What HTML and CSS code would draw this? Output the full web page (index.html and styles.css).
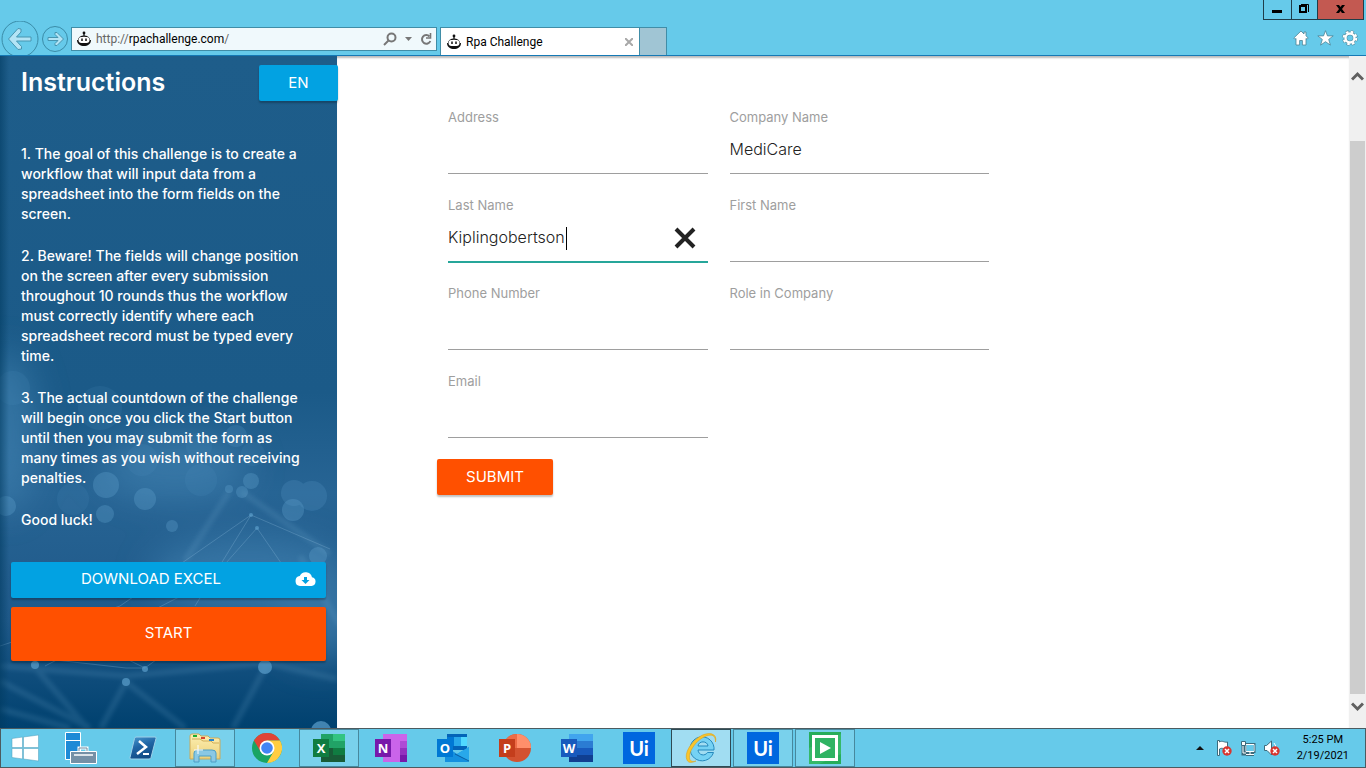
FILE: index.html
```html
<!DOCTYPE html>
<html lang="en">
<head>
<meta charset="utf-8">
<title>Rpa Challenge</title>
<link rel="stylesheet" href="styles.css">
</head>
<body>
<svg class="defs" width="0" height="0" aria-hidden="true">
  <symbol id="bot" viewBox="0 0 16 16">
    <circle cx="8" cy="2" r="1.4" fill="#111"/><path d="M8 2v3" stroke="#111" stroke-width="1.2"/>
    <path d="M2.500 10C2.500 3.500 13.500 3.500 13.500 10" fill="#fff" stroke="#111" stroke-width="1.400"/>
    <path d="M1 9h14c0 8-14 8-14 0Z" fill="#111"/>
    <rect x="2.500" y="6" width="11" height="6" rx="3" fill="#fff"/>
    <path d="M6 7.500v2.500M10 7.500v2.500" stroke="#111" stroke-width="1.500"/>
  </symbol>
  <symbol id="badge" viewBox="0 0 10 10">
    <circle cx="5" cy="5" r="4.700" fill="#d8362f"/><path d="M3 3l4 4M7 3L3 7" stroke="#fff" stroke-width="1.500"/>
  </symbol>
</svg>

<header class="chrome">
  <div class="window-controls">
    <button class="win" aria-label="Minimize"><svg width="27" height="19"><path d="M8 10h10v3H8z"/></svg></button>
    <button class="win" aria-label="Restore"><svg width="25" height="19" fill="none" stroke="#000"><path d="M8 6h6v6H8z" stroke-width="2"/><path d="M9 4.500h7.500V12" stroke-width="1"/></svg></button>
    <button class="win win-close" aria-label="Close"><svg width="45" height="19"><path d="M18 5h3l1.500 2L24 5h3l-3 4 3 4h-3l-1.500-2L21 13h-3l3-4z"/></svg></button>
  </div>
  <div class="toolbar">
    <button class="nav" aria-label="Back"><svg width="40" height="34" viewBox="0 0 40 34" fill="none"><circle cx="20" cy="18" r="18" stroke="#3a8ca8"/><path d="M21 8l-3-.5L8.500 18 18 28.500l3.500-.5v-2.500L16.500 20H31v-4H16.500l4.500-5z" fill="#b3e4f5" stroke="#4795b0"/></svg></button>
    <button class="nav" aria-label="Forward"><svg width="28" height="34" viewBox="0 0 28 34" fill="none"><circle cx="14" cy="18" r="12.500" stroke="#3a8ca8"/><path d="M14 11.500h2L22.500 18 16 24.500h-2v-2l3-3H7v-3h10l-3-3z" fill="#b3e4f5" stroke="#4795b0"/></svg></button>
    <div class="address">
      <svg width="16" height="16"><use href="#bot"/></svg>
      <div class="url" role="textbox" aria-label="Address bar" tabindex="0"><span>http://</span>rpachallenge.com<span>/</span></div>
      <button aria-label="Search"><svg width="14" height="14" fill="none" stroke="#777" stroke-width="2"><circle cx="8.500" cy="5.500" r="4"/><path d="M5.500 8.500L1 13"/></svg></button>
      <button aria-label="Show suggestions"><svg width="7" height="4"><path d="M0 0h7L3.500 4z" fill="#777"/></svg></button>
      <button aria-label="Refresh"><svg width="12" height="13" fill="none" stroke="#777" stroke-width="2"><path d="M9.500 3.500A4.300 4.300 0 1 0 10.300 8"/><path d="M10.500 0v5H6" stroke-width="1.600"/></svg></button>
    </div>
    <div class="tab"><svg width="16" height="16"><use href="#bot"/></svg><span>Rpa Challenge</span><button aria-label="Close tab"><svg width="8" height="8" stroke="#a8a8a8" stroke-width="2"><path d="M0 0l8 8M8 0L0 8"/></svg></button></div>
    <button class="new-tab" aria-label="New tab"></button>
    <div class="tools">
      <button aria-label="Home"><svg width="16" height="16" viewBox="0 0 16 16" fill="#fff" stroke="#4d8496" stroke-width=".8"><path d="M8 1L.8 8l1.200 1.300L3 8.400V15h3.600v-4.500h2.800V15H13V8.400l1 .9L15.200 8 13 5.800V2h-2v2z"/></svg></button>
      <button aria-label="Favorites"><svg width="17" height="16" viewBox="0 0 17 16" fill="#fff" stroke="#4d8496" stroke-width=".8"><path d="M8.500.7l2 5.200h5.700l-4.500 3.500 1.700 5.700-4.900-3.400-4.900 3.400 1.700-5.700L.8 5.900h5.700z"/></svg></button>
      <button aria-label="Tools"><svg width="16" height="16" viewBox="0 0 16 16"><g fill="none"><circle cx="8" cy="8" r="6.300" stroke="#4d8496" stroke-width="3" stroke-dasharray="3 1.950"/><circle cx="8" cy="8" r="4.600" stroke="#4d8496" stroke-width="3.600"/><circle cx="8" cy="8" r="6.300" stroke="#fff" stroke-width="2" stroke-dasharray="2.600 2.350"/><circle cx="8" cy="8" r="4.500" stroke="#fff" stroke-width="2.400"/></g></svg></button>
    </div>
  </div>
</header>

<div class="page">
  <aside class="sidebar">
    <svg class="network" viewBox="0 0 337 672" preserveAspectRatio="none" aria-hidden="true">
      <defs>
        <linearGradient id="base" x1="0" y1="0" x2="0" y2="1"><stop offset="0" stop-color="#1e5d8a"/><stop offset=".5" stop-color="#1b5a88"/><stop offset=".65" stop-color="#276494"/><stop offset=".84" stop-color="#1f5989"/><stop offset="1" stop-color="#00416f"/></linearGradient>
        <linearGradient id="edge"><stop offset="0" stop-color="#003a5f" stop-opacity=".55"/><stop offset="1" stop-color="#003a5f" stop-opacity="0"/></linearGradient>
        <filter id="haze" x="-50%" y="-50%" width="200%" height="200%"><feGaussianBlur stdDeviation="18"/></filter>
        <filter id="soft"><feGaussianBlur stdDeviation="2"/></filter>
      </defs>
      <rect width="337" height="672" fill="url(#base)"/>
      <g filter="url(#haze)" fill="#4b8dbc" opacity=".5">
        <ellipse cx="5" cy="375" rx="30" ry="80"/><ellipse cx="175" cy="410" rx="75" ry="30"/><ellipse cx="250" cy="520" rx="100" ry="38"/><ellipse cx="320" cy="560" rx="45" ry="45"/>
      </g>
      <g fill="#5c9dcb" opacity=".11">
        <circle cx="13" cy="332" r="17"/><circle cx="100" cy="352" r="22"/><circle cx="253" cy="398" r="12"/><circle cx="142" cy="404" r="16"/><circle cx="73" cy="443" r="16"/><circle cx="199" cy="390" r="13"/><circle cx="201" cy="424" r="16"/>
      </g>
      <g fill="#5c9dcb" opacity=".22">
        <circle cx="236" cy="380" r="11"/><circle cx="294" cy="437" r="13"/><circle cx="312" cy="440" r="15"/>
      </g>
      <g fill="#5fa0cc" opacity=".34">
        <circle cx="106" cy="429" r="13"/><circle cx="145" cy="443" r="11"/><circle cx="251" cy="425" r="8"/><circle cx="6" cy="450" r="10"/><circle cx="105" cy="458" r="9"/><circle cx="172" cy="470" r="6"/><circle cx="229" cy="433" r="4"/><circle cx="242" cy="436" r="6"/><circle cx="293" cy="454" r="11"/><circle cx="318" cy="500" r="9"/>
      </g>
      <g stroke="#76add2" stroke-width="6" fill="none" opacity=".17" filter="url(#soft)">
        <path d="M242 436L330 498M229 436L185 505M0 610L126 620L266 607L337 623M32 608L87 672M126 626L101 672M126 626L185 672M266 610L233 672M0 625L90 672M0 653L70 672M300 500L340 570"/>
      </g>
      <g stroke="#8cbbd9" fill="none" opacity=".3">
        <path d="M251 459L120 550L0 590M251 459L195 550M251 459L330 493M257 472L210 525L45 610M257 472L290 520M20 600L126 612L145 612L175 590M100 590L145 612"/>
      </g>
      <g fill="#579ac7" opacity=".75"><circle cx="251" cy="459" r="2"/><circle cx="257" cy="472" r="2"/><circle cx="35" cy="609" r="4"/><circle cx="145" cy="613" r="3"/><circle cx="126" cy="626" r="4"/><circle cx="265" cy="611" r="7"/><circle cx="321" cy="675" r="10"/></g>
      <rect width="9" height="672" fill="url(#edge)"/>
    </svg>
    <div class="sidebar-head"><h1>Instructions</h1><button class="btn lang">EN</button></div>
    <div class="steps">
      <p>1. The goal of this challenge is to create a<br>workflow that will input data from a<br>spreadsheet into the form fields on the<br>screen.</p>
      <p>2. Beware! The fields will change position<br>on the screen after every submission<br>throughout 10 rounds thus the workflow<br>must correctly identify where each<br>spreadsheet record must be typed every<br>time.</p>
      <p>3. The actual countdown of the challenge<br>will begin once you click the Start button<br>until then you may submit the form as<br>many times as you wish without receiving<br>penalties.</p>
      <p>Good luck!</p>
    </div>
    <div class="actions">
      <a class="btn download" href="#excel"><span>Download Excel</span><svg width="21" height="14" viewBox="0 0 21 14"><path d="M17 5.300A6.500 6.500 0 0 0 4.700 4.100 5 5 0 0 0 5 14h11.500a4.400 4.400 0 0 0 .5-8.700zM14.500 8l-4 4-4-4H9V5h3v3z" fill="#fff"/></svg></a>
      <button class="btn start">Start</button>
    </div>
  </aside>

  <main>
    <form class="form">
      <div class="fields">
        <div class="field"><label for="address">Address</label><input id="address" type="text"></div>
        <div class="field"><label for="company">Company Name</label><input id="company" type="text" value="MediCare"></div>
        <div class="field active"><label for="last">Last Name</label><input id="last" type="text" value="Kiplingobertson"><i class="caret"></i><button class="clear" type="button" aria-label="Clear"><svg width="22" height="22" stroke="#222" stroke-width="4"><path d="M2 2l18 18M20 2L2 20"/></svg></button></div>
        <div class="field"><label for="first">First Name</label><input id="first" type="text"></div>
        <div class="field"><label for="phone">Phone Number</label><input id="phone" type="text"></div>
        <div class="field"><label for="role">Role in Company</label><input id="role" type="text"></div>
        <div class="field"><label for="email">Email</label><input id="email" type="text"></div>
      </div>
      <button class="btn submit" type="button">Submit</button>
    </form>
  </main>

  <div class="scrollbar">
    <button aria-label="Scroll up"><svg width="13" height="10" fill="none" stroke="#606060" stroke-width="3"><path d="M1 8.500L6.500 3 12 8.500"/></svg></button>
    <div class="thumb"></div>
    <button aria-label="Scroll down"><svg width="13" height="10" fill="none" stroke="#606060" stroke-width="3"><path d="M1 1.500L6.500 7 12 1.500"/></svg></button>
  </div>
</div>

<footer class="taskbar">
  <button class="task task-start" aria-label="Start menu"><svg width="28" height="28" viewBox="0 0 28 28" fill="#fff" stroke="#4f9db8" stroke-width=".5"><path d="M1 4.500l10.500-1.400v10.400H1zM12.500 3L27.500 1v12.500h-15zM1 14.500h10.500v10.400L1 23.500zM12.500 14.500h15V27l-15-2z"/></svg></button>
  <button class="task" aria-label="Server Manager"><svg width="32" height="32" viewBox="0 0 32 32" stroke="#fff"><path d="M.5 .5h15v27H.5z" fill="#1e8ad6"/><path d="M.5 8.500h15"/><path d="M14 20v-4h8v4" fill="none" stroke-width="3"/><path d="M14 20v-4h8v4" fill="none" stroke="#6c8aa0"/><path d="M5.500 19.500h26v12h-26z" fill="#7590a6"/><path d="M9 23h19" stroke-width="1.500"/></svg></button>
  <button class="task" aria-label="PowerShell"><svg width="28" height="24" viewBox="0 0 28 24"><defs><linearGradient id="ps" x2=".4" y2="1"><stop stop-color="#4a9ad0"/><stop offset=".5" stop-color="#2065a5"/><stop offset="1" stop-color="#114b85"/></linearGradient></defs><path d="M7 1h19q1.500 0 1 1.500l-5 19q-.4 1.500-2 1.500H2q-1.400 0-1-1.500l4.500-19Q6 1 7 1z" fill="url(#ps)" stroke="#9fd0e8"/><path d="M10 5l7 6-9 7" fill="none" stroke="#fff" stroke-width="2.500"/><path d="M14 18h6" stroke="#fff" stroke-width="2"/></svg></button>
  <button class="task open" aria-label="File Explorer"><svg width="32" height="30" viewBox="0 0 32 30"><defs><linearGradient id="fo" x2="0" y2="1"><stop stop-color="#fdf0b4"/><stop offset="1" stop-color="#ecd078"/></linearGradient></defs><path d="M1 26V3q0-2 2-2h7l2 2h7l2 2h8q2 0 2 2v19z" fill="url(#fo)" stroke="#cba95a"/><path d="M3 6h8l3 2h8l2 2h6" fill="none" stroke="#d1ae58"/><path d="M4 2h4v2H4z" fill="#1aae33"/><path d="M12 4h4v2h-4z" fill="#d5452f"/><path d="M20 6h5v2h-5z" fill="#2686d1"/><path d="M5 29V20q0-3 4-3h14q4 0 4 3v9h-5v-6H10v6z" fill="#8ac8e4" stroke="#4c9fc6"/><path d="M9 12v9M5 17h9" stroke="#fff"/></svg></button>
  <button class="task" aria-label="Chrome"><svg width="30" height="30" viewBox="0 0 30 30"><circle cx="15" cy="15" r="15" fill="#19a463"/><path d="M2 7.500A15 15 0 0 1 28 7.500H15l-6.500 11z" fill="#e14436"/><path d="M28 7.500A15 15 0 0 1 15 30l6.500-11.300L15 7.500z" fill="#ffcd41"/><circle cx="15" cy="15" r="7.500" fill="#fff"/><circle cx="15" cy="15" r="5.800" fill="#4285f4"/></svg></button>
  <button class="task open" aria-label="Excel"><svg class="office" width="32" height="28" viewBox="0 0 32 28"><path d="M8 0h12v28H8z" fill="#21a366"/><path d="M20 0h12v7H20z" fill="#33c481"/><path d="M20 7h12v7H20z" fill="#21a366"/><path d="M8 14h12v7H8zM8 21h24v7H8z" fill="#185c37"/><path d="M20 14h12v7H20z" fill="#107c41"/><path d="M0 5h16v18H0z" fill="#107c41"/><text x="8" y="19">X</text></svg></button>
  <button class="task" aria-label="OneNote"><svg class="office" width="32" height="28" viewBox="0 0 32 28"><path d="M8 0h24v28H8z" fill="#ca64ea"/><path d="M25 7h7v7h-7z" fill="#ae4bd5"/><path d="M25 14h7v7h-7z" fill="#9332bf"/><path d="M25 21h7v7h-7z" fill="#7719aa"/><path d="M0 5h16v18H0z" fill="#7719aa"/><text x="8" y="19">N</text></svg></button>
  <button class="task" aria-label="Outlook"><svg class="office" width="32" height="28" viewBox="0 0 32 28"><path d="M10 0h20v16H10z" fill="#0364b8"/><path d="M10 3h7v9h-7z" fill="#0078d4"/><path d="M17 3h7v9h-7z" fill="#28a8ea"/><path d="M24 3h6v9h-6z" fill="#50d9ff"/><path d="M8 12l12 8 12-7v15H8z" fill="#1490df"/><path d="M20 20l12 8V13z" fill="#28a8ea"/><path d="M18 20l14 7" stroke="#0a5ca0"/><path d="M0 5h16v18H0z" fill="#0078d4"/><text x="8" y="19">O</text></svg></button>
  <button class="task" aria-label="PowerPoint"><svg class="office" width="32" height="28" viewBox="0 0 32 28"><circle cx="18" cy="14" r="14" fill="#d35230"/><path d="M18 14V0a14 14 0 0 1 14 14z" fill="#ff8f6b"/><path d="M18 14V0A14 14 0 0 0 4 14z" fill="#ed6c47"/><path d="M0 5h16v18H0z" fill="#c43e1c"/><text x="8" y="19">P</text></svg></button>
  <button class="task" aria-label="Word"><svg class="office" width="32" height="28" viewBox="0 0 32 28"><path d="M8 0h24v7H8z" fill="#41a5ee"/><path d="M8 7h24v7H8z" fill="#2b7cd3"/><path d="M8 14h24v7H8z" fill="#185abd"/><path d="M8 21h24v7H8z" fill="#103f91"/><path d="M0 5h16v18H0z" fill="#185abd"/><text x="8" y="19">W</text></svg></button>
  <button class="task" aria-label="UiPath Studio"><span class="ui">Ui</span></button>
  <button class="task focused" aria-label="Internet Explorer"><svg width="32" height="30" viewBox="0 0 32 30"><path fill-rule="evenodd" d="M28.500 19.500A12 12 0 1 1 29 14.500v2.500H13c.5 5.500 7 6.500 9.500 2.500zM13 13h10c-.5-5.500-9.500-5.500-10 0z" fill="#75d2f4" stroke="#2589bd"/><path d="M30.500 9C33 0 23-2 14 4 5 10-1 21 2 27c1 3 5 3 9 1-4 1-6 0-6.500-3C4 19 9 11 15 6.500 21 2 27 1 29 3.500c1 1.200 1.500 3 1.500 5.500z" fill="#f9c52c" stroke="#d99a13" stroke-width=".5"/></svg></button>
  <button class="task open" aria-label="UiPath"><span class="ui">Ui</span></button>
  <button class="task open" aria-label="UiPath Robot"><svg width="32" height="32"><path d="M0 0h32v32H0z" fill="#27ad5b"/><path d="M0 16L32 2v20L10 32H0z" fill="#35b968"/><path d="M4.500 4.500h23v23h-23z" fill="#2fb363" stroke="#fff" stroke-width="3"/><path d="M11 10l11 6-11 6z" fill="#fff"/></svg></button>
  <div class="tray">
    <button aria-label="Show hidden icons"><svg width="8" height="4"><path d="M0 4h8L4 0z" fill="#111"/></svg></button>
    <button class="first-icon" aria-label="Action Center"><svg width="16" height="16"><path d="M1.500.5v15h2V9c3-2 5 1 8 0V2c-3 1-5-2-8 0V.5z" fill="#fff" stroke="#3c6b7c"/><use href="#badge" x="6" y="6" width="10" height="10"/></svg></button>
    <button aria-label="Network"><svg width="16" height="16" fill="none"><path d="M6 4.500h8v7H6zM10 12v2M6 14.500h8M3 6v8h3" stroke="#3c6b7c" stroke-width="3"/><path d="M6 4.500h8v7H6zM10 12v2M6 14.500h8M3 6v7h3" stroke="#fff"/><path d="M6.500 5h7v6h-7z" fill="#66caea"/><path d="M1.500 1.500h4v4h-4z" fill="#fff" stroke="#3c6b7c"/></svg></button>
    <button aria-label="Volume"><svg width="16" height="16"><path d="M.5 5.500h2l5-4.500v14L3 10.500H.5z" fill="#fff" stroke="#3c6b7c"/><path d="M10 3q3 3 1 6" fill="none" stroke="#fff"/><use href="#badge" x="6" y="6" width="10" height="10"/></svg></button>
    <time class="clock" datetime="2021-02-19T17:25"><span>5:25 PM</span><span>2/19/2021</span></time>
  </div>
</footer>
</body>
</html>
```
FILE: styles.css
```css
* { box-sizing: border-box; }

body {
  margin: 0;
  min-height: 100vh;
  display: flex;
  flex-direction: column;
  background: #fff;
  font-family: Inter, "Open Sans", sans-serif;
  color: #222;
}

button {
  padding: 0;
  border: 0;
  background: none;
  font: inherit;
  color: inherit;
}

svg { display: block; flex: none; }
.defs { position: absolute; }

/* Browser frame */
.chrome {
  display: flex;
  flex-direction: column;
  height: 56px;
  background: #66caea;
  border-bottom: 1px solid #1579b5;
  font: 12px/16px Roboto, "Open Sans", sans-serif;
  color: #000;
}

.window-controls { display: flex; justify-content: flex-end; height: 20px; padding-right: 2px; }
.win { border: solid #1f3e4a; border-width: 0 0 1px 1px; }
.win-close { background: #c35951; border-right-width: 1px; }

.toolbar { display: flex; align-items: flex-end; flex: 1; }
.nav { padding-right: 1px; }

.address {
  display: flex;
  align-items: center;
  gap: 8px;
  width: 32%;
  max-width: 366px;
  height: 24px;
  margin: 0 3px 4px 1px;
  padding: 0 4px;
  background: #f0f9fc;
  border: 1px solid #408da7;
}
.url { flex: 1; margin-left: -4px; }
.url span { color: #666; }

.tab {
  display: flex;
  align-items: center;
  gap: 4px;
  width: 200px;
  height: 28px;
  padding: 0 6px 0 5px;
  background: #fff;
  border: 1px solid #408da7;
  border-bottom: 0;
}
.tab span { flex: 1; }
.new-tab { width: 27px; height: 28px; background: #a0c5d4; border: solid #408da7; border-width: 1px 1px 0 0; }
.tools { display: flex; gap: 8px; margin-left: auto; padding: 0 8px 9px 0; }

/* Page */
.page { display: flex; flex: 1; }

.sidebar {
  position: relative;
  flex: none;
  width: 337px;
  display: flex;
  flex-direction: column;
  background: #1c5a88;
  color: #fff;
}
.network { position: absolute; inset: 0; width: 100%; height: 100%; }
.sidebar-head, .steps, .actions { position: relative; }
.sidebar-head { display: flex; justify-content: space-between; padding: 9px 0 0 21px; margin-right: -1px; }

h1 { margin: 0; font-size: 25px; line-height: 34px; font-weight: 600; }

.steps { padding: 43px 16px 0 21px; font-size: 14px; line-height: 20px; font-weight: 500; }
.steps p { margin: 0 0 22px; white-space: nowrap; }

.btn {
  display: flex;
  align-items: center;
  justify-content: center;
  height: 36px;
  padding-bottom: 1px;
  border-radius: 2px;
  background: #ff5000;
  box-shadow: 0 2px 2px rgba(0, 0, 0, .25);
  color: #fff;
  font-size: 15px;
  line-height: 20px;
  text-transform: uppercase;
  text-decoration: none;
}
.lang { width: 79px; background: #02a2e2; }
.actions { display: flex; flex-direction: column; gap: 9px; padding: 10px 11px; }
.download { padding: 0 10px 2px; background: #02a2e2; }
.download span { flex: 1; padding-right: 14px; text-align: center; }
.start { height: 54px; padding-bottom: 2px; }

main { flex: 1; padding: 53px 20px 20px 100px; box-shadow: inset 0 3px 2px -1px #bbb; }
.form { max-width: 563px; }
.fields { display: grid; grid-template-columns: 1fr 1fr; gap: 23px 22px; padding: 0 11px; }
.field { position: relative; display: flex; flex-direction: column; gap: 2px; }
.field label { font-size: 13px; line-height: 16px; color: #9e9e9e; }
.field input {
  width: 100%;
  height: 47px;
  padding: 0 0 2px;
  border: 0;
  border-bottom: 1px solid #9e9e9e;
  outline: 0;
  background: none;
  font: 16px/24px Inter, "Open Sans", sans-serif;
  font-weight: 300;
  color: #222;
}
.active input { border-bottom-color: #26a69a; box-shadow: 0 1px 0 #26a69a; }
.caret { position: absolute; left: 118px; top: 30px; width: 1px; height: 23px; background: #000; }
.clear { position: absolute; right: 12px; top: 30px; }
.submit { width: 116px; margin-top: 21px; }

.scrollbar { display: flex; flex-direction: column; align-items: center; width: 17px; flex: none; padding: 15px 0 16px; background: #f0f0f0; }
.thumb { flex: 1; width: 15px; margin: 60px 0 8px; background: #cdcdcd; }

/* Taskbar */
.taskbar {
  display: flex;
  gap: 2px;
  height: 40px;
  background: #66caea;
  border: 1px solid #4c5b60;
}
.task { display: flex; align-items: center; justify-content: center; width: 60px; }
.task-start { width: 48px; }
.open { background: #79d1ec; outline: 1px solid #47889d; outline-offset: -1px; }
.focused { background: #a1ddf2; outline: 1px solid #2f4a54; outline-offset: -1px; }
.office text { font: bold 13px "Open Sans", sans-serif; fill: #fff; text-anchor: middle; }
.ui { width: 32px; height: 32px; background: #0067df; color: #fff; font: bold 20px/32px Lato, sans-serif; text-align: center; }

.tray { display: flex; align-items: center; gap: 8px; margin-left: auto; padding-right: 16px; }
.first-icon { margin-left: 4px; }
.clock {
  display: flex;
  flex-direction: column;
  align-items: center;
  margin-left: 9px;
  font: 11px/16px Roboto, "Open Sans", sans-serif;
  color: #000;
}
```
